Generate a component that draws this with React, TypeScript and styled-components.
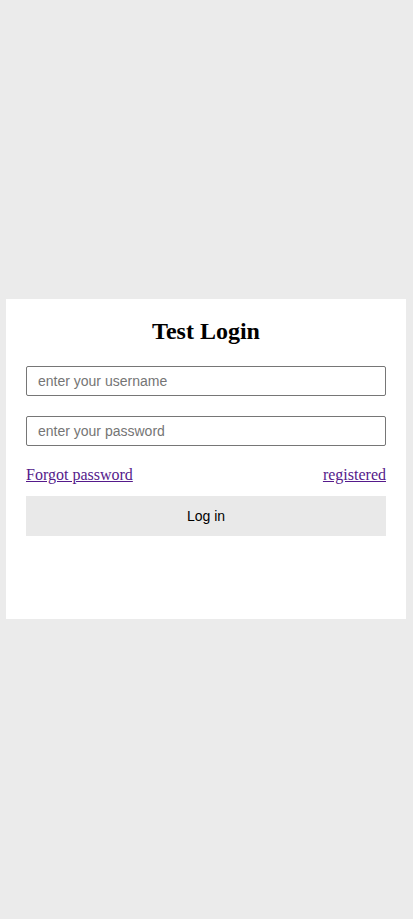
import React from 'react'
import styled, { createGlobalStyle } from 'styled-components'

const GlobalStyle = createGlobalStyle`
  html, body {
    margin: 0;
    padding: 0;
    background: #ebebeb;
  }
  * {
    box-sizing: border-box;
  }
`

const Page = styled.div`
  display: flex;
  align-items: center;
  justify-content: center;
  width: 412px;
  height: 918px;
  background: #ebebeb;
`

const Card = styled.form`
  display: flex;
  flex-direction: column;
  width: 400px;
  height: 320px;
  padding: 20px;
  background: #ffffff;
`

const Title = styled.h2`
  margin: 0 0 22px;
  text-align: center;
  font-family: "Liberation Serif", serif;
  font-size: 24px;
  line-height: 25px;
  font-weight: bold;
  color: #000;
`

const Input = styled.input`
  width: 100%;
  height: 30px;
  margin-bottom: 20px;
  padding: 0 11px;
  border: 1px solid #767676;
  border-radius: 2px;
  font-family: "Liberation Sans", Arial, sans-serif;
  font-size: 14px;
  color: #000;
  outline: none;

  &::placeholder {
    color: #757575;
  }
`

const LinkRow = styled.div`
  display: flex;
  justify-content: space-between;
  align-items: center;
  margin: 0 0 12px;
  font-family: "Liberation Serif", serif;
  font-size: 16px;
  line-height: 18px;
`

const TextLink = styled.a`
  color: #551a8b;
  text-decoration: underline;
`

const Button = styled.button`
  width: 100%;
  height: 40px;
  border: none;
  background: #e9e9e9;
  font-family: "Liberation Sans", Arial, sans-serif;
  font-size: 14px;
  color: #000;
  cursor: pointer;
`

const App: React.FunctionComponent = () => {
  return (
    <>
      <GlobalStyle />
      <Page>
        <Card onSubmit={(e) => e.preventDefault()}>
          <Title>Test Login</Title>
          <Input type="text" placeholder="enter your username" />
          <Input type="password" placeholder="enter your password" />
          <LinkRow>
            <TextLink href="#">Forgot password</TextLink>
            <TextLink href="#">registered</TextLink>
          </LinkRow>
          <Button type="submit">Log in</Button>
        </Card>
      </Page>
    </>
  )
}

export default App
